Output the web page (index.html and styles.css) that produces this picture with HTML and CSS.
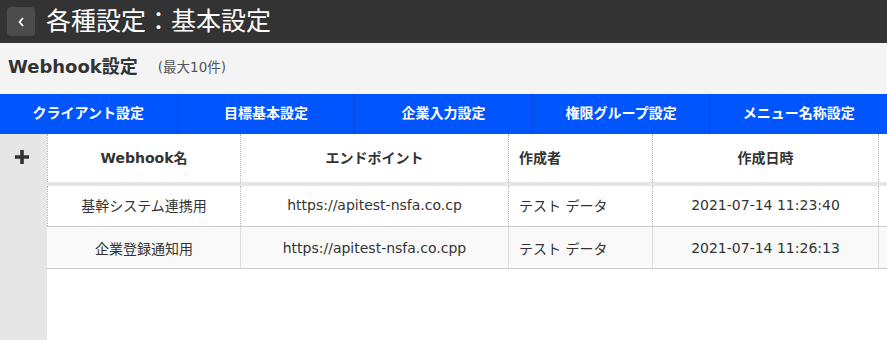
FILE: index.html
```html
<!DOCTYPE html>
<html lang="ja">
<head>
<meta charset="utf-8">
<title>各種設定：基本設定</title>
<link rel="stylesheet" href="styles.css">
</head>
<body>
<header class="topbar">
  <button class="back" type="button" aria-label="戻る">
    <svg width="8" height="12" viewBox="0 0 8 12"><polyline points="6,2 2.5,6 6,10" fill="none" stroke="#fff" stroke-width="1.8"/></svg>
  </button>
  <h1 class="title">各種設定：基本設定</h1>
</header>
<section class="subhead">
  <h2 class="subtitle">Webhook設定</h2>
  <span class="note">(最大10件)</span>
</section>
<nav class="tabs">
  <a class="tab">クライアント設定</a>
  <a class="tab">目標基本設定</a>
  <a class="tab">企業入力設定</a>
  <a class="tab">権限グループ設定</a>
  <a class="tab">メニュー名称設定</a>
</nav>
<main class="content">
  <aside class="side">
    <svg class="plus" width="14" height="14" viewBox="0 0 14 14"><path d="M7 0V14M0 7H14" stroke="#333" stroke-width="3.6"/></svg>
  </aside>
  <div class="grid">
    <div class="row head">
      <div class="cell c1 center">Webhook名</div>
      <div class="cell c2 center">エンドポイント</div>
      <div class="cell c3">作成者</div>
      <div class="cell c4 center">作成日時</div>
      <div class="cell c5"></div>
    </div>
    <div class="row body odd">
      <div class="cell c1 center">基幹システム連携用</div>
      <div class="cell c2 center">https://apitest-nsfa.co.cp</div>
      <div class="cell c3">テスト データ</div>
      <div class="cell c4 center">2021-07-14 11:23:40</div>
      <div class="cell c5"></div>
    </div>
    <div class="row body even">
      <div class="cell c1 center">企業登録通知用</div>
      <div class="cell c2 center">https://apitest-nsfa.co.cpp</div>
      <div class="cell c3">テスト データ</div>
      <div class="cell c4 center">2021-07-14 11:26:13</div>
      <div class="cell c5"></div>
    </div>
  </div>
</main>
</body>
</html>
```
FILE: styles.css
```css
html, body {
  margin: 0;
  padding: 0;
}
body {
  width: 887px;
  height: 340px;
  overflow: hidden;
  background: #fff;
  font-family: "DejaVu Sans", "Noto Sans CJK JP", sans-serif;
  color: #333;
  display: flex;
  flex-direction: column;
}
.topbar {
  height: 43px;
  flex: none;
  background: #333;
  display: flex;
  align-items: center;
  padding-left: 7px;
  gap: 11px;
  box-sizing: border-box;
  padding-bottom: 4px;
}
.back {
  width: 28px;
  height: 29px;
  border: none;
  border-radius: 4px;
  background: #4b4b4b;
  display: flex;
  align-items: center;
  justify-content: center;
  padding: 0;
  margin-top: 4px;
}
.title {
  margin: 0;
  font-family: "Noto Sans CJK JP", sans-serif;
  font-weight: 400;
  font-size: 25px;
  color: #fff;
  line-height: 1;
}
.subhead {
  height: 51px;
  flex: none;
  background: #f4f4f4;
  display: flex;
  align-items: center;
  padding-left: 8px;
  box-sizing: border-box;
  padding-bottom: 7px;
}
.subtitle {
  margin: 0;
  font-size: 18px;
  font-weight: 700;
  color: #333;
}
.note {
  margin-left: 20px;
  font-size: 13.5px;
  color: #555;
  margin-top: 2px;
}
.tabs {
  height: 40px;
  flex: none;
  background: #0055ff;
  display: flex;
}
.tab {
  flex: 1;
  display: flex;
  align-items: center;
  justify-content: center;
  color: #fff;
  font-weight: 700;
  font-size: 14px;
  border-right: 1px solid #0046d8;
  padding-bottom: 4px;
}
.tab:last-child {
  border-right: none;
}
.content {
  flex: 1;
  display: flex;
  min-height: 0;
}
.side {
  width: 47px;
  flex: none;
  background: #e6e6e6;
  display: flex;
  justify-content: center;
  align-items: flex-start;
  padding-top: 16px;
  box-sizing: border-box;
}
.plus {
  margin-right: 3px;
}
.grid {
  flex: 1;
  overflow: hidden;
  display: flex;
  flex-direction: column;
}
.row {
  display: flex;
  font-size: 14px;
}
.cell {
  flex: none;
  display: flex;
  align-items: center;
  box-sizing: border-box;
  padding: 0 10px;
  white-space: nowrap;
  border-left: 1px dotted #b5b5b5;
}
.center {
  justify-content: center;
}
.c1 { width: 193px; }
.c2 { width: 268px; }
.c3 { width: 144px; }
.c4 { width: 226px; }
.c5 { width: 120px; }
.head {
  height: 52px;
  border-bottom: 4px solid #e5e5e5;
  box-sizing: border-box;
  font-weight: 700;
}
.head .cell {
  padding-bottom: 3px;
}
.body {
  height: 41px;
  border-bottom: 1px solid #ccc;
  box-sizing: border-box;
}
.odd .cell {
  padding-bottom: 3px;
}
.even {
  height: 42px;
  background: #f9f9f9;
}
.even .cell {
  border-left: 1px solid #dcdcdc;
}
.even .c1 {
  border-left-color: transparent;
}
```
